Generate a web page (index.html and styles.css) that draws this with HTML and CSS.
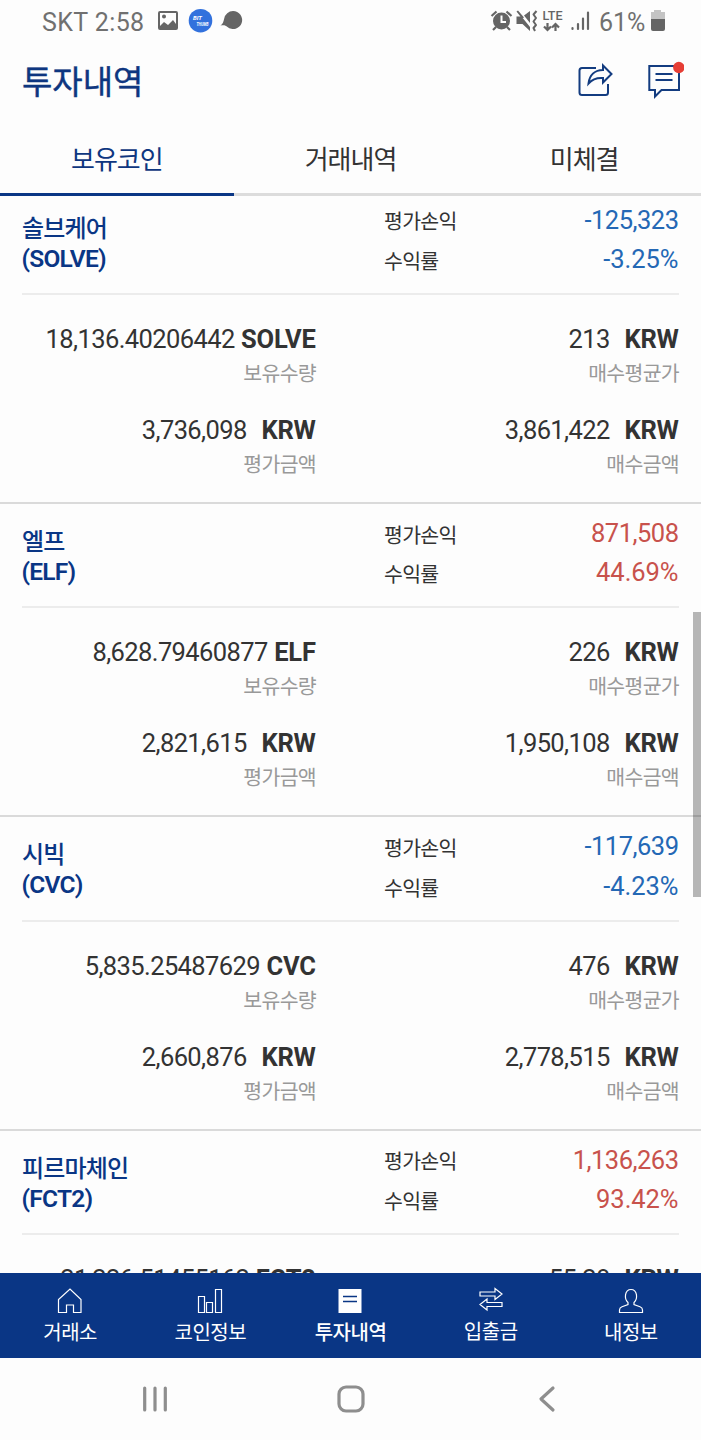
FILE: index.html
```html
<!DOCTYPE html>
<html lang="ko">
<head>
<meta charset="utf-8">
<title>투자내역</title>
<link rel="stylesheet" href="styles.css">
</head>
<body>
<div class="screen">
  <div class="status">
    <span class="status-text carrier">SKT 2:58</span>
    <svg class="status-left" width="88" height="28" viewBox="0 0 88 28">
      <path fill="#656565" fill-rule="evenodd" d="M3 3h16q2 0 2 2v15q0 2-2 2H3q-2 0-2-2V5q0-2 2-2zm0 2v13l4-4 4 3 5-5 3 4V5zM7 6.500a2 2 0 1 1 0 4 2 2 0 0 1 0-4z"/>
      <circle cx="43.500" cy="12.700" r="11.800" fill="#3271dd"/>
      <text class="app-mark" x="36" y="11.500" textLength="9" lengthAdjust="spacingAndGlyphs">BIT</text>
      <text class="app-mark" x="39.500" y="17.500" textLength="12" lengthAdjust="spacingAndGlyphs">THUMB</text>
      <path fill="#656565" d="M76 3a9 9 0 1 1-5.500 16c-2-2-4-2.200-7-1.500 2.300-1.500 3-3.500 3.700-7A9 9 0 0 1 76 3z"/>
    </svg>
    <span class="spacer"></span>
    <svg class="status-right" width="100" height="28" viewBox="0 0 100 28">
      <g fill="none" stroke="#656565">
        <circle cx="11.500" cy="13" r="8.500" fill="#656565" stroke="none"/>
        <path stroke-width="2.200" d="M1.500 8l5-4.500M21.500 8l-5-4.500M6 19l-3 3M17 19l3 3"/>
        <path stroke="#fff" stroke-width="2" d="M11.500 7.500V14H16"/>
        <path fill="#656565" stroke="none" d="M26.500 8.500h5L40 19v4l-7.500-7h-6zM34 7.500L40 3v12zM26.500 3.500l1.500-1 6 7-2 1z"/>
        <path stroke-width="2" stroke-linejoin="round" d="M46.500 3l-3 3.500 2.500 3.500-2.500 3.500L46 17l-2.500 3 1.500 3"/>
        <path stroke-width="2.200" d="M57.500 15v7M54 18.500l3.500 3.500 3.500-3.500M65.500 23v-7M62 19.500l3.500-3.500 3.500 3.500"/>
        <path stroke-width="2.200" stroke-linecap="round" d="M82.500 20v1M88 16v5M93 10.500V21M98 4.500V21"/>
      </g>
      <text class="lte" x="52.500" y="11.500" textLength="20" lengthAdjust="spacingAndGlyphs">LTE</text>
    </svg>
    <span class="status-text battery-text">61%</span>
    <svg class="battery" width="16" height="22" viewBox="0 0 16 22">
      <path fill="#c4c4c4" d="M4 0h7v2h4v8H1V2h3z"/>
      <path fill="#656565" d="M1 9h14v10q0 2-2 2H3q-2 0-2-2z"/>
    </svg>
  </div>

  <header class="header">
    <h1 class="title">투자내역</h1>
    <svg class="share" width="38" height="38" viewBox="0 0 38 38" fill="none" stroke="#133c80" stroke-width="2">
      <path d="M20 7H6Q3.500 7 3.500 9.500v22q0 2.500 2.500 2.500h23.500q2.500 0 2.500-2.500V23"/>
      <path d="M12.500 22.500C13.500 14 19 9 27 9V4.500l8.500 8.500-8.500 8.500V17c-6.500-.5-11 1.500-14.500 5.500z"/>
    </svg>
    <svg class="message" width="40" height="40" viewBox="0 0 40 40" fill="none" stroke="#133c80" stroke-width="2">
      <path d="M5.300 6H35v24H17.500L11 36.500V30H5.300z"/>
      <path d="M11.500 14h17M11.500 20h17"/>
      <circle cx="34.800" cy="7.500" r="5.700" fill="#e63e35" stroke="none"/>
    </svg>
  </header>

  <nav class="tabs">
    <div class="tab active">보유코인</div>
    <div class="tab">거래내역</div>
    <div class="tab">미체결</div>
  </nav>

  <main class="list">
    <section class="card">
      <div class="summary">
        <div class="name">솔브케어<br><span class="symbol">(SOLVE)</span></div>
        <div class="labels"><span>평가손익</span><span>수익률</span></div>
        <div class="result down"><span>-125,323</span><span class="rate">-3.25%</span></div>
      </div>
      <div class="details">
        <div class="cell"><p class="num">18,136.40206442 <b>SOLVE</b></p><p class="cap">보유수량</p></div>
        <div class="cell"><p class="num">213 <b class="krw">KRW</b></p><p class="cap">매수평균가</p></div>
        <div class="cell"><p class="num">3,736,098 <b class="krw">KRW</b></p><p class="cap">평가금액</p></div>
        <div class="cell"><p class="num">3,861,422 <b class="krw">KRW</b></p><p class="cap">매수금액</p></div>
      </div>
    </section>
    <section class="card">
      <div class="summary">
        <div class="name">엘프<br><span class="symbol">(ELF)</span></div>
        <div class="labels"><span>평가손익</span><span>수익률</span></div>
        <div class="result up"><span>871,508</span><span class="rate">44.69%</span></div>
      </div>
      <div class="details">
        <div class="cell"><p class="num">8,628.79460877 <b>ELF</b></p><p class="cap">보유수량</p></div>
        <div class="cell"><p class="num">226 <b class="krw">KRW</b></p><p class="cap">매수평균가</p></div>
        <div class="cell"><p class="num">2,821,615 <b class="krw">KRW</b></p><p class="cap">평가금액</p></div>
        <div class="cell"><p class="num">1,950,108 <b class="krw">KRW</b></p><p class="cap">매수금액</p></div>
      </div>
    </section>
    <section class="card">
      <div class="summary">
        <div class="name">시빅<br><span class="symbol">(CVC)</span></div>
        <div class="labels"><span>평가손익</span><span>수익률</span></div>
        <div class="result down"><span>-117,639</span><span class="rate">-4.23%</span></div>
      </div>
      <div class="details">
        <div class="cell"><p class="num">5,835.25487629 <b>CVC</b></p><p class="cap">보유수량</p></div>
        <div class="cell"><p class="num">476 <b class="krw">KRW</b></p><p class="cap">매수평균가</p></div>
        <div class="cell"><p class="num">2,660,876 <b class="krw">KRW</b></p><p class="cap">평가금액</p></div>
        <div class="cell"><p class="num">2,778,515 <b class="krw">KRW</b></p><p class="cap">매수금액</p></div>
      </div>
    </section>
    <section class="card">
      <div class="summary">
        <div class="name">피르마체인<br><span class="symbol">(FCT2)</span></div>
        <div class="labels"><span>평가손익</span><span>수익률</span></div>
        <div class="result up"><span>1,136,263</span><span class="rate">93.42%</span></div>
      </div>
      <div class="details">
        <div class="cell"><p class="num">21,226.51455162 <b>FCT2</b></p></div>
        <div class="cell"><p class="num">55.28 <b class="krw">KRW</b></p></div>
      </div>
    </section>
    <div class="scrollbar"></div>
  </main>

  <nav class="bottom">
    <div class="item">
      <svg width="26" height="26" viewBox="0 0 26 26"><path d="M1.500 24.500V11.500L13 1l11 10.500v13h-7.500V17h-7v7.500z"/></svg>
      <span>거래소</span>
    </div>
    <div class="item">
      <svg width="26" height="26" viewBox="0 0 26 26"><path d="M1.500 8.500h6v16h-6zM9.500 14.500h6v10h-6zM18.500 1.500h6v23h-6z"/></svg>
      <span>코인정보</span>
    </div>
    <div class="item current">
      <svg width="26" height="26" viewBox="0 0 26 26"><path fill="#fff" stroke="none" d="M1.500 1h23v24h-23z"/><path stroke="#0a3685" stroke-width="1.700" d="M6 8.500h14M6 13.500h14"/></svg>
      <span>투자내역</span>
    </div>
    <div class="item transfer">
      <svg width="26" height="26" viewBox="0 0 26 26"><path d="M2 5h15V1.500l7 5.500-7 5.500V9H2zM24 15.500H9V12l-7 5.500 7 5.500v-3.500h15z"/></svg>
      <span>입출금</span>
    </div>
    <div class="item">
      <svg width="26" height="26" viewBox="0 0 26 26"><path d="M10 14.500C6 11 6.500 1.500 13 1.500s7 9.500 3 13v2l6 2.200q2.500 1 2.500 3.300v2.500h-23V22q0-2.300 2.500-3.300l6-2.200z"/></svg>
      <span>내정보</span>
    </div>
  </nav>

  <div class="system">
    <svg width="30" height="30" viewBox="0 0 30 30"><path d="M4.700 4v22M15 4v22M25.300 4v22"/></svg>
    <svg width="30" height="30" viewBox="0 0 30 30"><rect x="3" y="3" width="24" height="24" rx="7"/></svg>
    <svg width="30" height="30" viewBox="0 0 30 30"><path d="M21 4L9 15l12 11"/></svg>
  </div>
</div>
</body>
</html>
```
FILE: styles.css
```css
* { box-sizing: border-box; }
body {
  margin: 0;
  background: #fdfdfd;
  color: #333;
  font-family: Roboto, "Noto Sans CJK KR", sans-serif;
}
.screen { width: 701px; height: 1440px; display: flex; flex-direction: column; overflow: hidden; }

.status { height: 44px; flex: none; display: flex; align-items: flex-start; padding: 8px 35px 0 42px; }
.status-text { font-size: 25px; line-height: 28px; color: #707070; white-space: nowrap; }
.carrier { width: 115px; letter-spacing: 0.4px; padding-top: 1px; }
.spacer { flex: 1; }
.app-mark { font: italic 700 5px Roboto, sans-serif; fill: #fff; }
.lte { font: 500 12.500px Roboto, sans-serif; fill: #656565; }
.battery-text { margin-left: 9px; width: 51px; letter-spacing: -0.1px; padding-top: 1px; }
.battery { margin-top: 2px; }

.header { height: 80px; flex: none; display: flex; padding: 0 17px 0 22px; }
.title { flex: 1; margin: 17px 0 0; font-size: 33px; line-height: 44px; font-weight: 400; color: #0e3680; -webkit-text-stroke: 0.4px #0e3680; }
.share { margin: 17px 30px 0 0; }
.message { margin: 16px 0 0; }

.tabs { height: 72px; flex: none; display: grid; grid-template-columns: repeat(3, 1fr); }
.tab { height: 72px; text-align: center; font-size: 26px; line-height: 72px; letter-spacing: -1px; border-bottom: 3px solid #dcdcdc; }
.tab.active { color: #0e3680; border-color: #0a3685; }

.list { position: relative; height: 1077px; flex: none; overflow: hidden; }
.card { height: 313.400px; border-bottom: 2px solid #dadada; }
.card:first-child { margin-top: -5.500px; }
.summary { height: 104.500px; margin: 0 22px; border-bottom: 2px solid #ececec; display: grid; grid-template-columns: 362px 1fr 1fr; }
.name { padding-top: 23px; font-size: 24px; line-height: 30px; font-weight: 500; color: #0a3685; letter-spacing: -0.800px; }
.symbol { font-size: 24.500px; font-weight: 600; letter-spacing: -0.750px; margin-left: -0.500px; }
.labels { padding-top: 12.800px; font-size: 20.500px; line-height: 39.500px; letter-spacing: -0.700px; }
.labels span, .result span { display: block; white-space: nowrap; }
.result { padding: 10px 0.500px 0 0; font-size: 25.500px; line-height: 39.500px; letter-spacing: -0.500px; text-align: right; }
.result .rate { letter-spacing: -0.050px; }
.down { color: #2468b5; }
.up { color: #c8524c; }
.details { display: grid; grid-template-columns: 294px 363px; padding: 26px 22px 0; }
.cell { height: 91px; text-align: right; }
.num, .cap { margin: 0; white-space: nowrap; }
.num { font-size: 25.500px; line-height: 36px; letter-spacing: -0.600px; padding-right: 0.300px; }
.num b { letter-spacing: -0.200px; margin-left: 0.700px; }
.num .krw { margin-left: 9px; }
.cap { font-size: 20.500px; line-height: 34px; letter-spacing: -0.700px; color: #999; }
.scrollbar { position: absolute; right: 0; top: 416px; width: 8px; height: 285px; background: rgba(0, 0, 0, 0.28); }

.bottom { height: 85px; flex: none; background: #0a3685; display: grid; grid-template-columns: repeat(5, 1fr); }
.item { display: flex; flex-direction: column; align-items: center; padding-top: 15px; color: #fff; font-size: 20px; line-height: 28px; letter-spacing: -0.500px; }
.item svg { fill: none; stroke: #fff; stroke-width: 1.200; margin-bottom: 5px; }
.current { font-weight: 500; }
.transfer { padding-top: 14px; }

.system { flex: 1; display: flex; justify-content: center; align-items: center; gap: 166px; }
.system svg { fill: none; stroke: #8e8e8e; stroke-width: 3.200; stroke-linecap: round; stroke-linejoin: round; }
```
